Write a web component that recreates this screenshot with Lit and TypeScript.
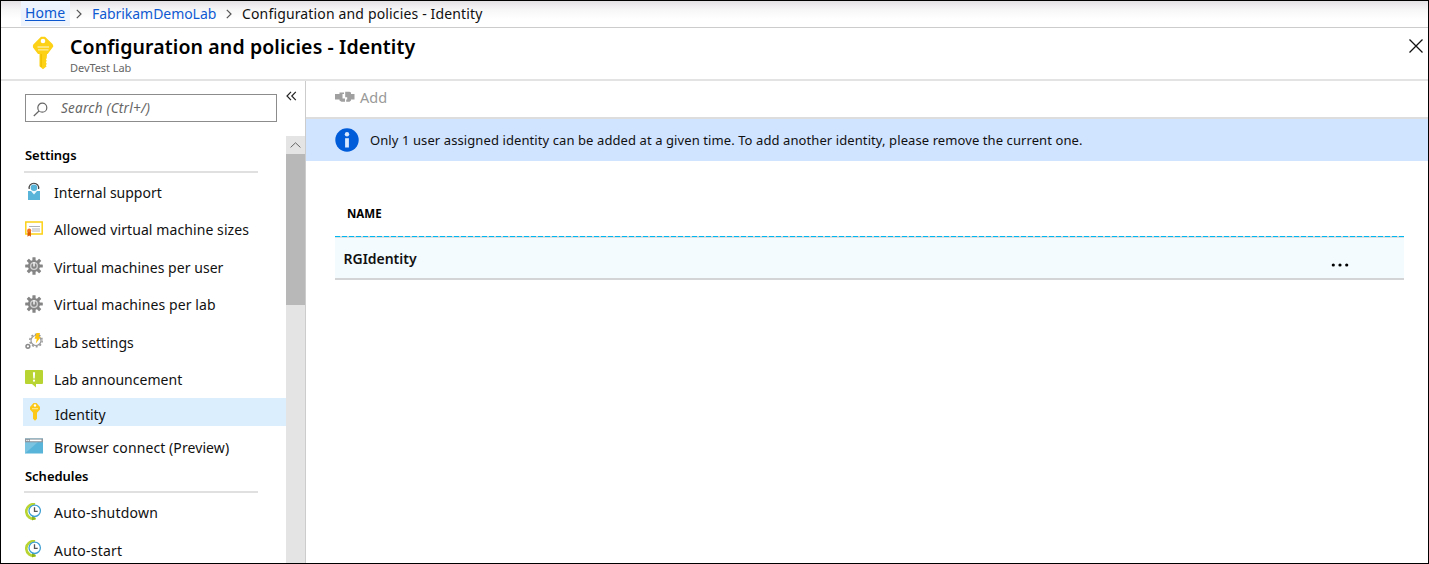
import { LitElement, html, css, svg, TemplateResult } from "lit";
import { customElement } from "lit/decorators.js";

const keyIcon = html`<svg viewBox="0 0 22 34" class="glyph">
  <path d="M9 0.800h4L20.500 8q.8 1 .8 2.500L16 17.500l-.2.500h-.8l-.3 4.300-.8 1 .8 1.500-.8 1.500.8 1.500-.8 1.600.8.800-3.700 3-3.500-3V18H6L1 11.500Q.6 9.500 1.300 8.500z" fill="#fcd116"/>
  <circle cx="11" cy="5" r="2.300" fill="#fff"/>
  <path d="M5.500 11h11.500M6 13.800h10.500" stroke="#fdec9c" stroke-width="1.300"/>
  <path d="M9.200 18v13" stroke="#eebd00" stroke-width="1.200"/>
</svg>`;

const smallKeyIcon = html`<svg viewBox="0 0 18 18" class="glyph">
  <path d="M7.500 0h3l3.500 4v2.500L11 9.800v6L9 17.800l-2-2v-6L4 6.500V4z" fill="#fcc81a"/>
  <circle cx="9" cy="2.500" r="1.200" fill="#fff"/>
  <path d="M6 5.700h6" stroke="#fdec9c" stroke-width="1"/>
</svg>`;

const teeth = [0, 45, 90, 135].map(
  (a) => svg`<rect x="7.400" y="0.200" width="3.200" height="17.600" rx=".5" transform="rotate(${a} 9 9)"/>`
);

const gearIcon = html`<svg viewBox="0 0 18 18" class="glyph">
  <g fill="#858585">${teeth}<circle cx="9" cy="9" r="6.100"/></g>
  <circle cx="9" cy="9" r="3.300" fill="none" stroke="#d2d2d2" stroke-width="1.300"/>
  <path d="M9 5v4.500" stroke="#f5f5f5" stroke-width="1.500"/>
</svg>`;

const clockIcon = html`<svg viewBox="0 0 18 18" class="glyph">
  <path d="M10 1.300A7.300 7.300 0 1 0 10.500 15.500" fill="none" stroke="#b8d432" stroke-width="2.600"/>
  <path d="M7 12.500l4 3-4 2z" fill="#8fb31c"/>
  <circle cx="9.700" cy="7.800" r="5.700" fill="#fff" stroke="#3f9fd2" stroke-width="1.300"/>
  <path d="M9.500 4.300V8.300h3.200" fill="none" stroke="#555" stroke-width="1.300"/>
</svg>`;

const icons: Record<string, TemplateResult> = {
  support: html`<svg viewBox="0 0 18 18" class="glyph">
    <path d="M4.200 7A4.800 4.800 0 1 1 13.600 7" fill="none" stroke="#444" stroke-width="1.200"/>
    <circle cx="9" cy="5.700" r="3.300" fill="#59b4d9"/>
    <path d="M3 9h12v9H3z" fill="#59b4d9"/>
    <path d="M6 9h6l-3 3.600z" fill="#f0fafe"/>
  </svg>`,
  sizes: html`<svg viewBox="0 0 18 18" class="glyph">
    <rect x=".8" y="2" width="16.400" height="12" fill="#fff" stroke="#fcd116" stroke-width="1.500"/>
    <path d="M4 6.500h11M7 9h8M7 11h8" stroke="#b0b4b8" stroke-width="1"/>
    <path d="M2.500 11h3.400v5.700l-1.700-1.200-1.700 1.200z" fill="#dd5900"/>
    <circle cx="4.200" cy="10.600" r="2" fill="#f2701a"/>
  </svg>`,
  gear: gearIcon,
  lab: html`<svg viewBox="0 0 18 18" class="glyph">
    <circle cx="11" cy="8.500" r="5" fill="#fff" stroke="#9a9a9a" stroke-width="1.200"/>
    <circle cx="11" cy="8.500" r="6.200" fill="none" stroke="#9a9a9a" stroke-width="1.500" stroke-dasharray="2 1.900"/>
    <circle cx="2.900" cy="14.300" r="1.900" fill="#fff" stroke="#8a8a8a" stroke-width="1.500"/>
    <path d="M11.500 1h3.500l-1.300 4h2.100l-5 6.500 1-4.700H9.500z" fill="#fcc30a"/>
  </svg>`,
  announce: html`<svg viewBox="0 0 18 18" class="glyph">
    <path d="M1 0h16q1 0 1 1v12q0 1-1 1h-6v3.500L7 14H1q-1 0-1-1V1q0-1 1-1z" fill="#b8d432"/>
    <path d="M7.900 2.300h2.200L9.700 8.600H8.300z" fill="#fff"/><circle cx="9" cy="10.700" r="1.100" fill="#fff"/>
  </svg>`,
  key: smallKeyIcon,
  browser: html`<svg viewBox="0 0 18 18" class="glyph">
    <rect x="0" y="1.500" width="18" height="15" fill="#59b4d9"/>
    <path d="M0 5V16.500L13 5z" fill="#7ac3e1"/>
    <rect x="0" y="1.500" width="18" height="3.800" fill="#8f989e"/>
    <rect x="5" y="2.600" width="11.500" height="1.600" fill="#fff"/>
    <circle cx="1.900" cy="3.400" r=".7" fill="#fff"/><circle cx="3.700" cy="3.400" r=".6" fill="#fff"/>
  </svg>`,
  clock: clockIcon,
};

interface Entry { icon: string; label: string; fit: string; selected?: boolean; }

const settings: Entry[] = [
  { icon: "support", label: "Internal support", fit: "" },
  { icon: "sizes", label: "Allowed virtual machine sizes", fit: "wide" },
  { icon: "gear", label: "Virtual machines per user", fit: "loose" },
  { icon: "gear", label: "Virtual machines per lab", fit: "wide" },
  { icon: "lab", label: "Lab settings", fit: "" },
  { icon: "announce", label: "Lab announcement", fit: "loose" },
  { icon: "key", label: "Identity", fit: "", selected: true },
  { icon: "browser", label: "Browser connect (Preview)", fit: "wide" },
];
const schedules: Entry[] = [
  { icon: "clock", label: "Auto-shutdown", fit: "wider" },
  { icon: "clock", label: "Auto-start", fit: "wider" },
];

@customElement("app-root")
export class AppRoot extends LitElement {
  static styles = css`
    :host { display: block; font-family: "Noto Sans", "Open Sans", sans-serif; color: #111; }
    * { box-sizing: border-box; }
    .window { width: 1429px; height: 564px; border: 1px solid #000; background: #fff; overflow: hidden;
      display: grid; grid-template-rows: 27px 53px 1fr; white-space: nowrap; }
    .glyph { display: block; width: 100%; height: 100%; }
    .loose { letter-spacing: .04px; }
    .wide { letter-spacing: .09px; }
    .wider { letter-spacing: .23px; }
    .crumbs { display: flex; align-items: center; border-bottom: 1px solid #ccc; font-size: 14px; line-height: 24px;
      background: linear-gradient(#e4e1e4, #f8f7f8 9px, #fff 18px); padding: 0 0 1px 20px; }
    .crumbs .home { background: #edf4fd; width: 49px; height: 25px; padding-left: 4px; color: #0b57d0;
      text-decoration: underline; text-underline-offset: 2px; letter-spacing: .1px; }
    .crumbs .lab { color: #0f5ad2; width: 125px; letter-spacing: -.05px; }
    .crumbs .sep { width: 6px; height: 10px; margin: 0 10px 0 6px; }
    .crumbs .sep.two { margin: 0 10px 0 9px; }
    .crumbs .page { letter-spacing: .15px; }
    .header { display: flex; border-bottom: 2px solid #e3e3e3; padding-left: 31px; }
    .header .key { width: 22px; height: 34px; margin-top: 8px; }
    .titles { margin-left: 16px; flex: 1; }
    .title { font-size: 19.500px; line-height: 26px; font-weight: 600; color: #000; margin-top: 6px; letter-spacing: .11px; }
    .subtitle { font-size: 11px; line-height: 14px; color: #666; margin-top: 1px; letter-spacing: -.06px; }
    .close { width: 14px; height: 14px; margin: 11px 5px 0 0; }
    .body { display: grid; grid-template-columns: 305px 1fr; min-height: 0; }
    .side { border-right: 1px solid #ccc; display: flex; flex-direction: column; min-height: 0; }
    .tools { height: 55px; flex: none; display: flex; padding: 13px 0 0 24px; }
    .search { width: 252px; height: 28px; border: 1.500px solid #8c8c8c; display: flex; align-items: center;
      font-size: 13.500px; letter-spacing: .25px; font-style: italic; color: #666; padding: 0 0 1px 7px; }
    .search .lens { width: 15px; height: 15px; margin: 4px 13px 0 0; }
    .collapse { width: 11px; height: 10px; margin-left: 9px; margin-top: -3px; }
    .scroll { flex: 1; display: flex; min-height: 0; }
    .menu { width: 285px; overflow: hidden; }
    .group { font-size: 13px; font-weight: 600; line-height: 20px; height: 37px; width: 234px; margin-left: 23px;
      padding-top: 9px; padding-left: 1px; border-bottom: 2px solid #e0e0e0; color: #000; letter-spacing: -.03px; }
    .group.second { height: 27px; padding-top: 0; margin-top: -2.500px; }
    .row { height: 37.500px; display: flex; align-items: center; font-size: 14px; padding: 1px 0 0 24px; }
    .row .ico { width: 18px; height: 18px; margin-right: 11px; margin-top: -2px; }
    .row.selected { height: 28px; background: #dbeefe; margin-left: 22px; padding: 4px 0 0 1px; }
    .row.selected .ico { margin: -5px 11px 0 2px; }
    .row.tail { height: 42px; padding-top: 0; }
    .row.low { padding-top: 3px; }
    .bar { width: 19px; background: #e4e4e4; display: flex; flex-direction: column; }
    .up { height: 18px; padding: 6px 4px; }
    .thumb { height: 151px; background: #b8b8b8; }
    .main { display: flex; flex-direction: column; }
    .toolbar { height: 38px; border-bottom: 2px solid #ddd; display: flex; align-items: center; padding: 0 0 4px 29px;
      color: #999; font-size: 14.500px; }
    .plug { width: 20px; height: 12px; margin-right: 5px; }
    .banner { height: 42px; background: #d0e3ff; display: flex; align-items: center; padding-left: 29px;
      font-size: 13px; letter-spacing: .09px; }
    .info { width: 24px; height: 24px; margin-right: 11px; }
    .table { margin: 41px 24px 0 29px; }
    .th { font-size: 11.500px; font-weight: 700; line-height: 16px; height: 34px; padding: 4px 0 0 12px; color: #000; }
    .dash { height: 2px; border-bottom: 1px solid #d8e2e5;
      background: repeating-linear-gradient(90deg, #00b7f1 0 5px, #d5d5d5 5px 7px); }
    .tr { height: 42px; background: #f3fbfe; border-bottom: 2px solid #d2d4d5; display: flex; align-items: center;
      justify-content: space-between; padding: 0 55px 0 8.500px; font-size: 14px; font-weight: 600; letter-spacing: -.02px; }
    .more { width: 18px; height: 4px; margin-top: 13px; }
  `;

  private renderRow(e: Entry, place: string) {
    return html`<div class="row ${e.selected ? "selected" : ""} ${place}">
      <div class="ico">${icons[e.icon]}</div><span class=${e.fit}>${e.label}</span>
    </div>`;
  }

  render() {
    const chevron = html`<svg viewBox="0 0 6 10" class="glyph"><path d="M.8.8L5 5 .8 9.200" fill="none" stroke="#555" stroke-width="1.200"/></svg>`;
    return html`<div class="window">
      <div class="crumbs">
        <span class="home">Home</span>
        <span class="sep">${chevron}</span>
        <span class="lab">FabrikamDemoLab</span>
        <span class="sep two">${chevron}</span>
        <span class="page">Configuration and policies - Identity</span>
      </div>
      <div class="header">
        <div class="key">${keyIcon}</div>
        <div class="titles">
          <div class="title">Configuration and policies - Identity</div>
          <div class="subtitle">DevTest Lab</div>
        </div>
        <div class="close"><svg viewBox="0 0 14 14" class="glyph"><path d="M.5.5l13 13M13.500.5l-13 13" stroke="#111" stroke-width="1.300"/></svg></div>
      </div>
      <div class="body">
        <div class="side">
          <div class="tools">
            <div class="search">
              <div class="lens"><svg viewBox="0 0 15 15" class="glyph"><circle cx="9.300" cy="5.700" r="4.500" fill="none" stroke="#666" stroke-width="1.200"/><path d="M6 9L.8 14" stroke="#666" stroke-width="1.200"/></svg></div>
              <span>Search (Ctrl+/)</span>
            </div>
            <div class="collapse"><svg viewBox="0 0 11 10" class="glyph"><path d="M5 .8L1 5l4 4.200M9.800.8L5.800 5l4 4.200" fill="none" stroke="#222" stroke-width="1.200"/></svg></div>
          </div>
          <div class="scroll">
            <div class="menu">
              <div class="group">Settings</div>
              ${settings.map((e, i) => this.renderRow(e, i === settings.length - 1 ? "tail" : ""))}
              <div class="group second">Schedules</div>
              ${schedules.map((e) => this.renderRow(e, "low"))}
            </div>
            <div class="bar">
              <div class="up"><svg viewBox="0 0 11 6" class="glyph"><path d="M.6 5.400L5.500.8l4.900 4.600" fill="none" stroke="#666" stroke-width="1"/></svg></div>
              <div class="thumb"></div>
            </div>
          </div>
        </div>
        <div class="main">
          <div class="toolbar">
            <div class="plug"><svg viewBox="0 0 20 12" class="glyph"><path d="M0 3h4.500V1.500H9V3H7.500v4.500H10v3.300H6.500L4.500 9.500V8.500H0z" fill="#a0a0a0"/><path d="M19.500 3H16V1.500L14.500.7H10.200V6.300h2v2.200h-1v2.300H14.500L16 9.500v-1h3.500z" fill="#a0a0a0"/></svg></div>
            <span>Add</span>
          </div>
          <div class="banner">
            <div class="info"><svg viewBox="0 0 24 24" class="glyph"><circle cx="12" cy="12" r="11.700" fill="#015cda"/><circle cx="12" cy="6.300" r="2.200" fill="#d8e8ff"/><rect x="10.100" y="10.200" width="3.800" height="9.300" fill="#d8e8ff"/></svg></div>
            <span>Only 1 user assigned identity can be added at a given time. To add another identity, please remove the current one.</span>
          </div>
          <div class="table">
            <div class="th">NAME</div>
            <div class="dash"></div>
            <div class="tr"><span>RGIdentity</span>
              <div class="more"><svg viewBox="0 0 18 4" class="glyph"><circle cx="2.300" cy="2" r="1.600"/><circle cx="9" cy="2" r="1.600"/><circle cx="15.700" cy="2" r="1.600"/></svg></div>
            </div>
          </div>
        </div>
      </div>
    </div>`;
  }
}
